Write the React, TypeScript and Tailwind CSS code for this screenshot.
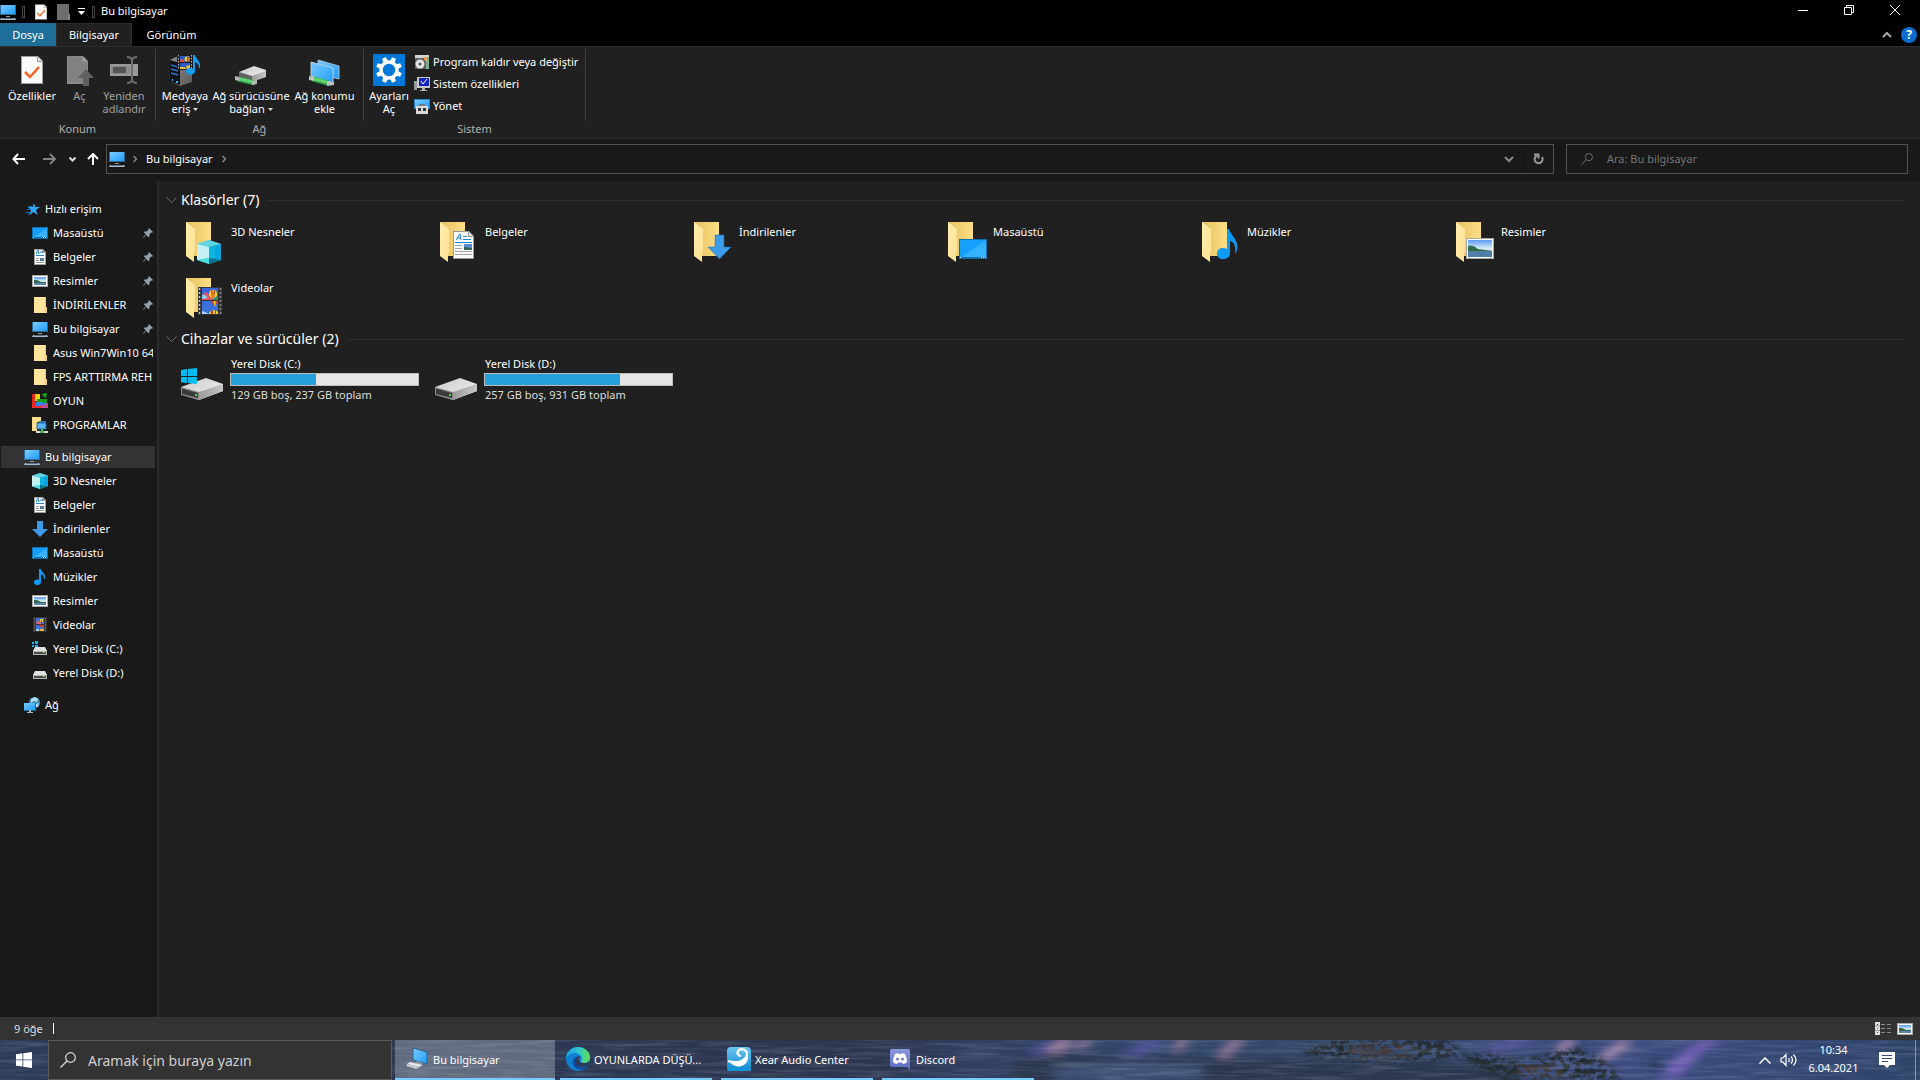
import type { ReactNode } from 'react'

interface IconProps {
  className?: string
}

interface NavItem {
  label: string
  icon: ReactNode
  pinned?: boolean
}

// Gradients shared by every icon on the page
function IconDefs() {
  return (
    <svg className="absolute w-0 h-0" aria-hidden="true">
      <defs>
        <linearGradient id="screen" x1="0" y1="0" x2="1" y2="1">
          <stop offset="0" stopColor="#7ccbff" />
          <stop offset="1" stopColor="#1f9dfb" />
        </linearGradient>
        <linearGradient id="desk" x1="0" y1="0" x2="1" y2="1">
          <stop offset="0" stopColor="#1a9fff" />
          <stop offset="0.5" stopColor="#12a0ff" />
          <stop offset="0.52" stopColor="#30b0ff" />
          <stop offset="1" stopColor="#3cb4ff" />
        </linearGradient>
        <linearGradient id="folderBack" x1="0" y1="0" x2="1" y2="0">
          <stop offset="0" stopColor="#e5c062" />
          <stop offset="1" stopColor="#fddf85" />
        </linearGradient>
        <linearGradient id="folderFront" x1="0" y1="0" x2="1" y2="1">
          <stop offset="0" stopColor="#ffecac" />
          <stop offset="1" stopColor="#ffe293" />
        </linearGradient>
        <linearGradient id="driveTop" x1="0" y1="0" x2="1" y2="1">
          <stop offset="0" stopColor="#c9cacc" />
          <stop offset="1" stopColor="#f2f3f5" />
        </linearGradient>
        <linearGradient id="driveSide" x1="0" y1="0" x2="1" y2="0">
          <stop offset="0" stopColor="#9b9b9b" />
          <stop offset="1" stopColor="#c6c6c6" />
        </linearGradient>
        <linearGradient id="sky" x1="0" y1="0" x2="0" y2="1">
          <stop offset="0" stopColor="#5b9cf5" />
          <stop offset="0.5" stopColor="#d8ecf8" />
          <stop offset="1" stopColor="#7ba4c8" />
        </linearGradient>
        <linearGradient id="server" x1="0" y1="0" x2="1" y2="1">
          <stop offset="0" stopColor="#8f8f8f" />
          <stop offset="1" stopColor="#5b5b5b" />
        </linearGradient>
        <linearGradient id="edgeTop" x1="0" y1="0" x2="1" y2="0">
          <stop offset="0" stopColor="#1aa0e0" />
          <stop offset="0.5" stopColor="#2fc4d4" />
          <stop offset="1" stopColor="#63e04c" />
        </linearGradient>
        <linearGradient id="xear" x1="0" y1="0" x2="0" y2="1">
          <stop offset="0" stopColor="#6cc8f0" />
          <stop offset="1" stopColor="#0d86d0" />
        </linearGradient>
        <linearGradient id="discord" x1="0" y1="0" x2="0" y2="1">
          <stop offset="0" stopColor="#8a9adf" />
          <stop offset="1" stopColor="#5a6bc0" />
        </linearGradient>
      </defs>
    </svg>
  )
}

function PcIcon() {
  return (
    <svg width="16" height="16" viewBox="0 0 16 16" className="shrink-0">
      <rect x="0" y="1" width="16" height="10" fill="#2b6a94" />
      <rect x="1" y="1" width="14" height="9" fill="url(#screen)" />
      <rect x="6" y="12" width="4" height="1" fill="#8e9aa3" />
      <path d="M1 14h14l1 2H0z" fill="#a9bccb" />
      <rect x="2" y="14" width="12" height="1" fill="#5d7486" />
    </svg>
  )
}

function DesktopIcon() {
  return (
    <svg width="16" height="16" viewBox="0 0 16 16" className="shrink-0">
      <rect x="0" y="2" width="16" height="12" fill="#1170b4" />
      <rect x="1" y="3" width="14" height="9" fill="url(#desk)" />
      <path d="M1 12h1v1H1zM11 12h1v1h-1zM13 12h1v1h-1z" fill="#fff" />
    </svg>
  )
}

function DocumentIcon() {
  return (
    <svg width="16" height="16" viewBox="0 0 16 16" className="shrink-0">
      <path d="M2 0h9l3 3v13H2z" fill="#a0a0a0" />
      <path d="M3 1h7v3h3v11H3z" fill="#fafafa" />
      <path d="M4 5l2-4 1 4M8 3h3" stroke="#1b84d6" fill="none" />
      <path d="M4 6h8v1H4z" fill="#1b84d6" />
      <path d="M4 9h3v1H4zM4 11h3v1H4zM4 13h8v1H4z" fill="#9a9a9a" />
      <rect x="8" y="9" width="4" height="3" fill="#4c7fa0" />
    </svg>
  )
}

function PictureIcon() {
  return (
    <svg width="16" height="16" viewBox="0 0 16 16" className="shrink-0">
      <rect x="0" y="2" width="16" height="12" fill="#a8a8a8" />
      <rect x="1" y="3" width="14" height="10" fill="#fff" />
      <rect x="2" y="4" width="12" height="8" fill="url(#sky)" />
      <path d="M2 7l3 0 4 2h5v1H2z" fill="#35664e" />
      <path d="M2 10h12v2H2z" fill="#5b86a8" />
    </svg>
  )
}

function FolderIcon() {
  return (
    <svg width="16" height="16" viewBox="0 0 16 16" className="shrink-0">
      <path d="M2 0h12v10h1v6H2z" fill="#e9c467" />
      <path d="M2 0h11v16H2z" fill="#ffe59b" />
      <path d="M13 10h2v6h-2z" fill="#f4d27a" />
    </svg>
  )
}

function ArrowDownIcon() {
  return (
    <svg width="16" height="16" viewBox="0 0 16 16" className="shrink-0">
      <path d="M5 0h6v8h5l-8 8-8-8h5z" fill="#3d9be9" />
    </svg>
  )
}

function MusicIcon() {
  return (
    <svg width="16" height="16" viewBox="0 0 16 16" className="shrink-0">
      <path d="M7 0h2c0 3 5 4 4 10h-1c0-3-1-4-3-5v8c0 4-7 4-7 0.500 0-3 3-3.500 5-2.500z" fill="#0c9bf5" />
    </svg>
  )
}

function CubeIcon({ className = 'w-4 h-4' }: IconProps) {
  return (
    <svg viewBox="0 0 24 24" className={`${className} shrink-0`}>
      <path d="M0 4l12-4 12 4v16l-12 4-12-4z" fill="#35c3d6" />
      <path d="M0 4l12-4 12 4-12 3z" fill="#5fd3e0" />
      <path d="M0 4l12 3v11L0 20z" fill="#c5f0f3" />
      <path d="M12 7l12-3v16l-12-2z" fill="#0aa5dd" />
      <path d="M12 7l6-1.500v13l-6-0.500z" fill="#0cb6dc" />
      <path d="M0 20l12-2v6z" fill="#4fdde0" />
      <path d="M12 18l12 2-12 4z" fill="#08718f" />
    </svg>
  )
}

function SmallFilmIcon() {
  return (
    <svg width="16" height="16" viewBox="0 0 16 16" className="shrink-0">
      <rect x="1" y="0" width="14" height="15" fill="#333" />
      <path d="M2.500 1v14M13.500 1v14" stroke="#777" strokeDasharray="1 1" />
      <rect x="4" y="1" width="8" height="6" fill="#3f6fd8" />
      <rect x="4" y="8" width="8" height="6" fill="#3f6fd8" />
      <path d="M4 5l3-1 2 2v1H4z" fill="#d66a7a" />
      <rect x="8" y="2" width="3" height="3" fill="#f0cd28" />
      <rect x="9" y="3" width="1" height="3" fill="#b8332a" />
      <rect x="8" y="8" width="3" height="2" fill="#d03a2a" />
      <path d="M4 12h3v2H4z" fill="#a9d6f5" />
      <rect x="8" y="12" width="4" height="2" fill="#e8b92c" />
    </svg>
  )
}

// Film strip of the "Videolar" tile: two balloon frames between the perforations
function FilmStrip() {
  return (
    <g>
      <rect x="20" y="13" width="24" height="28" fill="#333" />
      <path d="M21.500 14v27M42.500 14v27" stroke="#777" strokeWidth="2" strokeDasharray="2 2" />
      <path d="M21.500 14v27" stroke="#f0cc6c" strokeWidth="1" strokeDasharray="2 2" />
      <rect x="24" y="14" width="16" height="12" fill="#3a68dc" />
      <path d="M24 21l4-3 4 4 3 4H24z" fill="#e0556b" />
      <path d="M24 21l3 0 3 3-6 1z" fill="#8fd0f0" />
      <path d="M35 26l5-5v5z" fill="#2f9a4c" />
      <circle cx="35" cy="20" r="4" fill="#f5d322" />
      <path d="M33 16.500h4l-1 8h-2z" fill="#d02c28" />
      <path d="M34.500 16h1v9h-1z" fill="#f5d322" />
      <rect x="24" y="27" width="16" height="13" fill="#3a70da" />
      <path d="M33 27h7l-3 5h-1z" fill="#e03a28" />
      <path d="M35.500 27h2v5h-1z" fill="#f5d322" />
      <path d="M24 37l3 1 4 2H24z" fill="#a9d6f5" />
      <path d="M31 40a5 4 0 0 1 9-2v2z" fill="#f5d322" />
      <path d="M33 37h2v3h-2zM37 36h1v4h-1z" fill="#d02c28" />
    </g>
  )
}

function StarIcon() {
  return (
    <svg width="16" height="16" viewBox="0 0 16 16" className="shrink-0">
      <path d="M10 2l1.200 4H16l-4 3 1.500 5-4-3L5.500 14l1.500-5-3-3h4.500z" fill="#2fa8f5" />
      <path d="M4 5.500h4M3 8.500h4M2 11.500h4M4 13.500h2" stroke="#1272b8" />
    </svg>
  )
}

function GameIcon() {
  return (
    <svg width="16" height="16" viewBox="0 0 16 16" className="shrink-0">
      <path d="M0 1h4v14H0z" fill="#e8281e" />
      <path d="M3 1h5v7H3z" fill="#f6d800" />
      <path d="M5 6h10v4H5z" fill="#12a012" />
      <path d="M10 1l5-1-1 5-3-2z" fill="#0ea518" />
      <path d="M4 9h8v4H4z" fill="#2b86f0" />
      <path d="M8 10h8v5H8z" fill="#c4468c" />
      <path d="M5 10h8v2H5z" fill="#2b86f0" />
      <path d="M0 13h9v2H0z" fill="#f03030" />
    </svg>
  )
}

function ProgramsIcon() {
  return (
    <svg width="16" height="16" viewBox="0 0 16 16" className="shrink-0">
      <path d="M0 0h9v5H5v9H0z" fill="#ffe08a" />
      <path d="M7 4h7v6H7z" fill="#2a7fb6" />
      <path d="M5 6h9v6H5z" fill="#5bb8f2" stroke="#256d9c" />
      <rect x="9" y="12" width="2" height="2" fill="#4fc35f" />
      <path d="M4 14h12v2H4z" fill="#d9dedd" />
      <path d="M8 14h4v2H8z" fill="#45b854" />
    </svg>
  )
}

function SmallDriveIcon({ system }: { system?: boolean }) {
  return (
    <svg width="16" height="16" viewBox="0 0 16 16" className="shrink-0">
      <path d="M3 6h10l2 4H1z" fill="#e2e2e2" />
      <path d="M1 10h14v4H1z" fill="#b5b5b5" />
      <path d="M2 11h12v2H2z" fill="#4a4a4a" />
      <rect x="11" y="11" width="2" height="1" fill="#3fe04a" />
      {system && <path d="M0 0h6v6H0z" fill="#1a1a1a" />}
      {system && <path d="M0 1h2v2H0zM3 0h3v3H3zM0 4h2v2H0zM3 4h3v2H3z" fill="#10b0ee" />}
    </svg>
  )
}

function NetworkIcon() {
  return (
    <svg width="16" height="16" viewBox="0 0 16 16" className="shrink-0">
      <circle cx="10.500" cy="5.500" r="5.500" fill="#3f8db0" />
      <path d="M7 2l4-2 3 2-1 3-3-1-3 2zM12 7l3-1-1 4-2 0z" fill="#b5dcea" />
      <rect x="0" y="6" width="12" height="8" fill="#2b6a94" />
      <rect x="0" y="6" width="11" height="7" fill="url(#screen)" />
      <path d="M5 13h2v2H5zM3 15h6v1H3z" fill="#a9bccb" />
    </svg>
  )
}

function PinIcon() {
  return (
    <svg width="10" height="10" viewBox="0 0 10 10" className="shrink-0">
      <path d="M6 0l4 4-1 0.700-0.800-0.200L6.500 6.500 6.300 9 5.300 9 3.200 6.900 0.500 10 0 9.500 2.900 6.600 1 4.500 1.200 3.500 3.500 3.500 5.500 1.700 5.300 0.700z" fill="#93a1ab" />
    </svg>
  )
}

// 48px tile icons
function FolderTileIcon({ children }: { children: ReactNode }) {
  return (
    <svg width="48" height="48" viewBox="0 0 48 48" className="shrink-0">
      <path d="M8 4h25v34H8z" fill="url(#folderBack)" />
      <path d="M8 4l9 7v24l-1 0v9l-8-6z" fill="url(#folderFront)" />
      {children}
    </svg>
  )
}

function DriveTileIcon({ system }: { system?: boolean }) {
  return (
    <svg width="48" height="48" viewBox="0 0 48 48" className="shrink-0">
      <path d="M3 26l25-9 17 6v7l-24 9-18-6z" fill="url(#driveTop)" />
      <path d="M21 31l24-8v7l-24 9z" fill="url(#driveSide)" />
      <path d="M3 26l18 5v8L3 34z" fill="#8a8a8a" />
      <path d="M4 27.500l16 4.500v5L4 33z" fill="#3a3a3a" />
      <rect x="17" y="33" width="2" height="2" fill="#3fe04a" />
      {system && (
        <path d="M3 9l6-1v7H3zM10 8l9-1v8h-9zM3 16h6v6l-6-0.700zM10 16h9v7l-9-1z" fill="#00bcf2" />
      )}
    </svg>
  )
}

// Ribbon icons
function CheckDocIcon({ className }: IconProps) {
  return (
    <svg viewBox="0 0 22 28" className={className}>
      <path d="M0 0h17l5 5v23H0z" fill="#9d9d9d" />
      <path d="M1 1h15v5h5v21H1z" fill="#fafafa" />
      <path d="M17 1l4 4h-4z" fill="#e4e4e4" />
      <path d="M4 16l5 5 9-10" stroke="#f26522" strokeWidth="2.500" fill="none" />
    </svg>
  )
}

function OpenIcon() {
  return (
    <svg width="28" height="32" viewBox="0 0 28 32">
      <path d="M1 2h16l5 5v23H1z" fill="#8b8b8b" />
      <path d="M2 3h14v5h5v20H2z" fill="#828282" />
      <path d="M17 3l4 4h-4z" fill="#a5a5a5" />
      <path d="M20 15l8 9h-5v8h-6v-8h-5z" fill="#606060" />
    </svg>
  )
}

function RenameIcon() {
  return (
    <svg width="30" height="32" viewBox="0 0 30 32">
      <rect x="1" y="10" width="28" height="12" fill="#999" />
      <rect x="2" y="12" width="19" height="8" fill="#8b8b8b" />
      <rect x="4" y="13" width="13" height="6" fill="#555" />
      <path d="M18 3q5 0 5 4v18q0 4-5 4M28 3q-5 0-5 4M28 29q-5 0-5-4" stroke="#6b6b6b" strokeWidth="2" fill="none" />
    </svg>
  )
}

function MediaIcon() {
  return (
    <svg width="32" height="32" viewBox="0 0 32 32">
      <path d="M1 6l8-4 14 4v22l-12 4L1 27z" fill="url(#server)" />
      <path d="M1 6l10 3v22L1 27z" fill="#111" />
      <path d="M2 11l7 2M2 15l7 2M2 19l7 2" stroke="#2a73d4" strokeWidth="1.500" />
      <path d="M3 26h1M7 28h2" stroke="#37b6ff" strokeWidth="2" />
      <rect x="8" y="1" width="16" height="15" fill="#1c1c1c" />
      <path d="M9.500 1v15M22.500 1v15" stroke="#b8b8b8" strokeDasharray="1.500 1.500" />
      <path d="M11 2h10v6H11zM11 9h10v6H11z" fill="#2b58c8" />
      <path d="M11 6l3-1 2 3h-5z" fill="#e04f4f" />
      <circle cx="18" cy="5" r="2.500" fill="#f2cf25" />
      <path d="M18 3h1.500v5H18z" fill="#c52f25" />
      <path d="M11 13h4l3 2h-7zM17 12l4-1v4h-3z" fill="#e8c53a" />
      <path d="M24 1h2c1 4 6 6 5 13h-1c0-3-1-5-4-6v9c0 5-9 5-9 0.500 0-4 4-4 7-3z" fill="#159df0" />
    </svg>
  )
}

function NetDriveIcon() {
  return (
    <svg width="32" height="32" viewBox="0 0 32 32">
      <path d="M4 18l15-6 12 4v6l-15 6-12-3z" fill="url(#driveTop)" />
      <path d="M17 22l14-5v6l-14 5z" fill="url(#driveSide)" />
      <path d="M4 18l13 4v6L4 24z" fill="#626262" />
      <path d="M3 25l17 4" stroke="#2f9f45" strokeWidth="5" />
      <path d="M3 24.500l17 4" stroke="#5fd472" strokeWidth="3" />
      <path d="M0 22l4 1v4l-4-1zM17 27l5-1v4l-5 1z" fill="#b8b8b8" />
    </svg>
  )
}

function NetLocationIcon() {
  return (
    <svg width="32" height="32" viewBox="0 0 32 32">
      <path d="M9 6l21 6v13l-21-5z" fill="url(#screen)" stroke="#9dbccd" />
      <path d="M2 8l22 6v15L2 22z" fill="url(#screen)" stroke="#b9cdd8" />
      <path d="M4 25l15 4" stroke="#2f9f45" strokeWidth="5" />
      <path d="M4 24.500l15 4" stroke="#5fd472" strokeWidth="3" />
      <path d="M0 22l5 1v4l-5-1zM18 27l7 1v3l-7 1z" fill="#c2c2c2" />
    </svg>
  )
}

function SettingsIcon() {
  const teeth = [0, 45, 90, 135, 180, 225, 270, 315]
  return (
    <svg width="32" height="32" viewBox="0 0 32 32">
      <rect width="32" height="32" fill="#0078d7" />
      <circle cx="16" cy="16" r="8" fill="none" stroke="#fff" strokeWidth="3.500" />
      {teeth.map(angle => (
        <path key={angle} d="M14 3h4l0.500 4h-5z" fill="#fff" transform={`rotate(${angle + 22.5} 16 16)`} />
      ))}
    </svg>
  )
}

function UninstallIcon() {
  return (
    <svg width="16" height="16" viewBox="0 0 16 16" className="shrink-0">
      <path d="M1 1h14v3H1z" fill="#d5d5d5" />
      <path d="M1 4h11v11H1z" fill="#5f5f5f" />
      <path d="M12 3h3v12h-3z" fill="#7fae8e" />
      <path d="M9 3h4v4h-2z" fill="#e8a058" />
      <circle cx="6" cy="10" r="4.500" fill="#e3e3e3" />
      <circle cx="6" cy="10" r="1.500" fill="#555" />
    </svg>
  )
}

function SystemIcon() {
  return (
    <svg width="16" height="16" viewBox="0 0 16 16" className="shrink-0">
      <path d="M0 5h3v9H0z" fill="#9a9a9a" />
      <rect x="0" y="6" width="2" height="1" fill="#52e052" />
      <rect x="3" y="1" width="13" height="11" fill="#c8c8c8" />
      <rect x="5" y="2" width="10" height="8" fill="#1223c0" />
      <path d="M7 5l2 3 4-5" stroke="#fff" fill="none" />
      <path d="M8 12h3v2H8zM6 14h7v1H6z" fill="#b0b0b0" />
    </svg>
  )
}

function ManageIcon() {
  return (
    <svg width="16" height="16" viewBox="0 0 16 16" className="shrink-0">
      <rect x="0" y="1" width="16" height="10" fill="#2f86c6" />
      <rect x="1" y="2" width="14" height="8" fill="url(#screen)" />
      <path d="M5 6h6v2H5z" fill="#777" />
      <path d="M2 8h12v8H2z" fill="#d9d9d9" />
      <path d="M4 10h3v3H4zM9 10h3v3H9z" fill="#333" />
    </svg>
  )
}

function Caret() {
  return (
    <svg width="5" height="3" viewBox="0 0 5 3" className="inline-block ml-[3px] mb-[2px] align-middle">
      <path d="M0 0h5L2.500 3z" fill="#ddd" />
    </svg>
  )
}

function SearchIcon({ className }: IconProps) {
  return (
    <svg viewBox="0 0 16 16" className={className} fill="none" stroke="currentColor" strokeWidth="1.200">
      <circle cx="10.500" cy="5.500" r="4.800" />
      <path d="M7 9L0.500 15.500" />
    </svg>
  )
}

function WindowsLogo() {
  return (
    <svg width="16" height="16" viewBox="0 0 16 16">
      <path d="M0 2.200l6.500-0.900v6.200H0zM7.300 1.200L16 0v7.500H7.300zM0 8.300h6.500v6.300L0 13.700zM7.300 8.300H16V16l-8.700-1.200z" fill="#fff" />
    </svg>
  )
}

function TaskPcIcon() {
  return (
    <svg width="24" height="24" viewBox="0 0 24 24" className="shrink-0">
      <path d="M8 1l14 4v12L8 13z" fill="url(#screen)" stroke="#29658c" />
      <path d="M12 14l6 2-3 2-5-2z" fill="#8b949b" />
      <path d="M5 15l13 3-4 2-12-3z" fill="#e4e8ea" />
      <path d="M2 17l13 3-4 2-10-3z" fill="#c3c9cd" />
    </svg>
  )
}

function EdgeIcon() {
  return (
    <svg width="24" height="24" viewBox="0 0 24 24" className="shrink-0">
      <circle cx="12" cy="12" r="12" fill="#1180d4" />
      <path d="M0 12C0 5 5 0 12 0c7 0 12 5 12 10 0 4-3 6-6 6-3 0-4-1-3-2 3-4-2-8-6-8-5 0-8 3-9 6z" fill="url(#edgeTop)" />
      <path d="M24 14c-3 3-11 3-11-2 0-1 1-2 1-3-4 0-6 4-5 8 1 3 5 5 9 4 2 0 4-2 4-2z" fill="#2d3c58" />
      <path d="M8 11c-3 5 0 12 7 12 3 0 5-1 7-4-5 2-13 1-13-5 0-2 1-4 3-5-2 0-3 1-4 2z" fill="#0c4f9e" />
    </svg>
  )
}

function XearIcon() {
  return (
    <svg width="24" height="24" viewBox="0 0 24 24" className="shrink-0">
      <rect width="24" height="24" rx="4" fill="url(#xear)" />
      <path d="M1 14c9 3 19 0 19-7 0-4-5-6-8-4-3 3-1 6 2 6" fill="none" stroke="#fff" strokeWidth="2.200" />
      <path d="M1 13c8 4 16 1 19-6 5 10-10 19-19 6z" fill="#fff" />
      <rect y="21" width="24" height="3" rx="1.500" fill="#1593d8" />
    </svg>
  )
}

function DiscordIcon() {
  return (
    <svg width="24" height="24" viewBox="0 0 24 24" className="shrink-0">
      <path d="M4 2h16q2 0 2 2v19l-3-3H4q-2 0-2-2V4q0-2 2-2z" fill="url(#discord)" />
      <path d="M7 7l3-1 0.500 1h3L14 6l3 1q2 4 2 8-2 2-4 2l-1-1.500h-4L9 17q-2 0-4-2 0-4 2-8z" fill="#fff" />
      <circle cx="9.500" cy="12" r="1.500" fill="#6b7bcb" />
      <circle cx="14.500" cy="12" r="1.500" fill="#6b7bcb" />
    </svg>
  )
}

// Strip of the night landscape showing through the taskbar
function Wallpaper() {
  return (
    <svg className="absolute inset-0 w-full h-full" viewBox="0 0 1920 40" preserveAspectRatio="none" aria-hidden="true">
      <defs>
        <linearGradient id="night" x1="0" y1="0" x2="1" y2="0">
          <stop offset="0" stopColor="#2d3b57" />
          <stop offset="0.45" stopColor="#2c3650" />
          <stop offset="0.55" stopColor="#33456b" />
          <stop offset="0.7" stopColor="#334a6c" />
          <stop offset="0.85" stopColor="#3c4c80" />
          <stop offset="1" stopColor="#2d4468" />
        </linearGradient>
        <filter id="soft" x="-20%" y="-50%" width="140%" height="200%">
          <feGaussianBlur stdDeviation="4" />
        </filter>
        <filter id="leaves" x="-10%" y="-20%" width="120%" height="140%">
          <feGaussianBlur in="SourceGraphic" stdDeviation="3" result="mass" />
          <feTurbulence type="fractalNoise" baseFrequency="0.16 0.2" numOctaves="3" seed="7" />
          <feColorMatrix values="0 0 0 0 0  0 0 0 0 0  0 0 0 0 0  6 0 0 0 -2.400" result="holes" />
          <feComposite in="mass" in2="holes" operator="in" />
        </filter>
        <filter id="grain" x="0" y="0" width="100%" height="100%">
          <feTurbulence type="fractalNoise" baseFrequency="0.02 0.3" numOctaves="3" seed="3" />
          <feColorMatrix values="0 0 0 0 0.550  0 0 0 0 0.600  0 0 0 0 0.750  1.200 0 0 0 -0.500" />
        </filter>
      </defs>
      <rect width="1920" height="40" fill="url(#night)" />
      <g filter="url(#soft)">
        <path d="M1020 14l200 4 300 6v22h-520z" fill="#2a384f" />
        <path d="M1050 30q80-14 160 0l-20 10h-130z" fill="#40547a" />
        <path d="M1025 14l30-14h20l-35 14zM1120 14l30-14h20l-30 14z" fill="#5a5aa8" />
        <path d="M1480 12l40-14h20l-45 14zM1660 38q20-34 50-40h20q-30 10-50 40z" fill="#6a5cb0" />
        <path d="M1596 18l24-16h16l-30 18zM1552 12l14-12h14l-16 12z" fill="#b890b0" />
        <path d="M1042 12l20-14h18l-20 14zM1072 8l12-9h12l-14 9zM1170 10l10-10h12l-12 10zM1216 16l16-16h16l-22 16z" fill="#a07a98" />
      </g>
      <g filter="url(#leaves)">
        <path d="M1298 12l30-12h120l14 12-20 8-60 2-60-4z" fill="#23272c" />
        <path d="M1452 16l36-2 30 6 40-8 20-4 24 12 24 20h-120z" fill="#23292d" />
        <path d="M1350 6h60v10h-60zM1520 26h40v10h-40z" fill="#4a4140" />
      </g>
      <g filter="url(#soft)" opacity="0.6">
        <path d="M1644 22l18-4-4 12z" fill="#1f2733" />
      </g>
      <rect width="1920" height="40" filter="url(#grain)" opacity="0.35" />
    </svg>
  )
}

const quickAccess: NavItem[] = [
  { label: 'Masaüstü', icon: <DesktopIcon />, pinned: true },
  { label: 'Belgeler', icon: <DocumentIcon />, pinned: true },
  { label: 'Resimler', icon: <PictureIcon />, pinned: true },
  { label: 'İNDİRİLENLER', icon: <FolderIcon />, pinned: true },
  { label: 'Bu bilgisayar', icon: <PcIcon />, pinned: true },
  { label: 'Asus Win7Win10 64', icon: <FolderIcon /> },
  { label: 'FPS ARTTIRMA REH', icon: <FolderIcon /> },
  { label: 'OYUN', icon: <GameIcon /> },
  { label: 'PROGRAMLAR', icon: <ProgramsIcon /> }
]

const thisPc: NavItem[] = [
  { label: '3D Nesneler', icon: <CubeIcon /> },
  { label: 'Belgeler', icon: <DocumentIcon /> },
  { label: 'İndirilenler', icon: <ArrowDownIcon /> },
  { label: 'Masaüstü', icon: <DesktopIcon /> },
  { label: 'Müzikler', icon: <MusicIcon /> },
  { label: 'Resimler', icon: <PictureIcon /> },
  { label: 'Videolar', icon: <SmallFilmIcon /> },
  { label: 'Yerel Disk (C:)', icon: <SmallDriveIcon system /> },
  { label: 'Yerel Disk (D:)', icon: <SmallDriveIcon /> }
]

const folders: NavItem[] = [
  {
    label: '3D Nesneler',
    icon: <svg x="19" y="22" width="24" height="24" viewBox="0 0 24 24"><CubeIcon className="w-6 h-6" /></svg>
  },
  {
    label: 'Belgeler',
    icon: (
      <g>
        <path d="M21 13h16l5 5v23H21z" fill="#9a9a9a" />
        <path d="M22 14h14v5h5v21H22z" fill="#fafafa" />
        <path d="M37 14l4 4h-4z" fill="#ddd" />
        <path d="M24 22l4-6 1 6M25 20h4" stroke="#1b84d6" fill="none" />
        <path d="M31 18h4v1h-4zM31 21h8v1h-8zM23 24h17v1H23z" fill="#1b84d6" />
        <path d="M23 27h7v1h-7zM23 30h7v1h-7zM23 33h17v1H23zM23 36h17v1H23z" fill="#a3a3a3" />
        <rect x="32" y="26" width="8" height="6" fill="#5b8bd0" />
        <path d="M32 29l8 1v2h-8z" fill="#2f6658" />
      </g>
    )
  },
  {
    label: 'İndirilenler',
    icon: <path d="M29 17h9v12h7L33.500 41 22 29h7z" fill="#3d9be9" stroke="#1f6cb0" strokeWidth="0.500" />
  },
  {
    label: 'Masaüstü',
    icon: (
      <g>
        <rect x="19" y="26" width="28" height="15" fill="#1170b4" />
        <rect x="19" y="21" width="28" height="20" fill="#1170b4" />
        <rect x="20" y="22" width="26" height="17" fill="url(#desk)" />
        <path d="M20 39h1v1h-1zM41 39h1v1h-1zM43 39h1v1h-1zM45 39h1v1h-1z" fill="#fff" />
      </g>
    )
  },
  {
    label: 'Müzikler',
    icon: <path d="M33 11h2c1 6 10 10 8 21l-2 4c1-9-1-12-5-13v12c0 8-13 8-13 1 0-6 6-7 10-5z" fill="#0c9bf5" />
  },
  {
    label: 'Resimler',
    icon: (
      <g>
        <rect x="18" y="20" width="28" height="21" fill="#a8a8a8" />
        <rect x="19" y="21" width="26" height="19" fill="#fff" />
        <rect x="20" y="22" width="24" height="17" fill="url(#sky)" />
        <path d="M20 28q5-2 10 3l14 2H20z" fill="#2f6b46" />
        <path d="M20 33h24v6H20z" fill="#4f7ea6" />
      </g>
    )
  },
  { label: 'Videolar', icon: <FilmStrip /> }
]

const drives = [
  { label: 'Yerel Disk (C:)', info: '129 GB boş, 237 GB toplam', used: 45.5, system: true },
  { label: 'Yerel Disk (D:)', info: '257 GB boş, 931 GB toplam', used: 72, system: false }
]

const tasks = [
  { label: 'Bu bilgisayar', icon: <TaskPcIcon />, active: true },
  { label: 'OYUNLARDA DÜŞÜ...', icon: <EdgeIcon />, active: false },
  { label: 'Xear Audio Center', icon: <XearIcon />, active: false },
  { label: 'Discord', icon: <DiscordIcon />, active: false }
]

function TitleBar() {
  return (
    <header className="flex h-[23px] bg-black">
      <div className="flex items-center flex-1">
        <PcIcon />
        <span className="w-[3px] h-3 ml-[6px] border border-[#4a4a4a]" />
        <button aria-label="Özellikler" className="ml-[10px]"><CheckDocIcon className="w-3 h-4" /></button>
        <button aria-label="Yeni klasör" className="ml-[10px]">
          <svg width="13" height="16" viewBox="0 0 13 16"><path d="M0 0h12v10h1v6H0z" fill="#6e6e6e" /><path d="M11 10h2v6h-2z" fill="#858585" /></svg>
        </button>
        <button aria-label="Hızlı erişim araç çubuğu" className="ml-2">
          <svg width="7" height="7" viewBox="0 0 7 7"><path d="M0 0h7v1H0zM0 3h7L3.500 7z" fill="#fff" /></svg>
        </button>
        <span className="w-[3px] h-3 ml-[7px] border border-[#4a4a4a]" />
        <h1 className="ml-[6px] pb-[2px]">Bu bilgisayar</h1>
      </div>
      <div className="flex pr-[2px] pb-[3px]">
        <button aria-label="Simge durumuna küçült" className="flex items-center justify-center w-[46px]">
          <svg width="10" height="10" viewBox="0 0 10 10"><path d="M0 5h10v1H0z" fill="#fff" /></svg>
        </button>
        <button aria-label="Önceki boyut" className="flex items-center justify-center w-[46px]">
          <svg width="10" height="10" viewBox="0 0 10 10" fill="none" stroke="#fff"><path d="M0.500 2.500h7v7h-7zM2.500 2.500v-2h7v7h-2" /></svg>
        </button>
        <button aria-label="Kapat" className="flex items-center justify-center w-[46px]">
          <svg width="10" height="10" viewBox="0 0 10 10" stroke="#fff"><path d="M0 0l10 10M10 0L0 10" /></svg>
        </button>
      </div>
    </header>
  )
}

function RibbonTabs() {
  return (
    <nav className="flex h-[23px] bg-black">
      <button className="w-14 bg-[#1d6f99]">Dosya</button>
      <button className="w-[76px] bg-[#202020] border border-b-0 border-[#2d2d2d]">Bilgisayar</button>
      <button className="w-[79px]">Görünüm</button>
      <div className="flex items-center gap-[9px] ml-auto pr-[3px]">
        <button aria-label="Şeridi simge durumuna küçült">
          <svg width="10" height="6" viewBox="0 0 10 6" fill="none" stroke="#aaa" strokeWidth="2"><path d="M1 5l4-4 4 4" /></svg>
        </button>
        <button aria-label="Yardım" className="w-4 h-4 rounded-full bg-[#0b6cce] text-xs leading-4 font-bold">?</button>
      </div>
    </nav>
  )
}

interface RibbonButtonProps {
  icon: ReactNode
  lines: ReactNode[]
  width: string
  disabled?: boolean
}

function RibbonButton({ icon, lines, width, disabled }: RibbonButtonProps) {
  return (
    <button disabled={disabled} className={`${width} flex flex-col items-center pt-[3px] ${disabled ? 'text-[#a0a0a0]' : ''}`}>
      <span className="flex items-center justify-center h-8 mb-[3px]">{icon}</span>
      {lines.map((line, i) => (
        <span key={i} className="leading-[13px] whitespace-nowrap">{line}</span>
      ))}
    </button>
  )
}

function RibbonGroup({ title, className, children }: { title: string; className: string; children: ReactNode }) {
  return (
    <section className="flex pt-[2px]">
      <div className={className}>
        <div className="flex items-start h-[71px] pt-[2px]">{children}</div>
        <h2 className="text-center leading-[18px] text-[#b0b0b0]">{title}</h2>
      </div>
      <span className="w-px h-[72px] bg-[#404040]" />
    </section>
  )
}

function Ribbon() {
  const systemActions = [
    { label: 'Program kaldır veya değiştir', icon: <UninstallIcon /> },
    { label: 'Sistem özellikleri', icon: <SystemIcon /> },
    { label: 'Yönet', icon: <ManageIcon /> }
  ]

  return (
    <div className="flex h-[93px] bg-[#202020] border-y border-[#2d2d2d]">
      <RibbonGroup title="Konum" className="w-[155px] px-1">
        <RibbonButton width="w-[56px]" icon={<CheckDocIcon className="w-[22px] h-7" />} lines={['Özellikler']} />
        <RibbonButton width="w-[39px]" icon={<OpenIcon />} lines={['Aç']} disabled />
        <RibbonButton width="w-[50px]" icon={<RenameIcon />} lines={['Yeniden', 'adlandır']} disabled />
      </RibbonGroup>
      <RibbonGroup title="Ağ" className="w-[207px] px-1">
        <RibbonButton width="w-[50px]" icon={<MediaIcon />} lines={['Medyaya', <>eriş<Caret /></>]} />
        <RibbonButton width="w-[82px]" icon={<NetDriveIcon />} lines={['Ağ sürücüsüne', <>bağlan<Caret /></>]} />
        <RibbonButton width="w-[65px]" icon={<NetLocationIcon />} lines={['Ağ konumu', 'ekle']} />
      </RibbonGroup>
      <RibbonGroup title="Sistem" className="w-[221px]">
        <RibbonButton width="w-[50px]" icon={<SettingsIcon />} lines={['Ayarları', 'Aç']} />
        <div>
          {systemActions.map(action => (
            <button key={action.label} className="flex items-center gap-[3px] h-[22px]">
              {action.icon}
              {action.label}
            </button>
          ))}
        </div>
      </RibbonGroup>
    </div>
  )
}

function Crumb() {
  return (
    <svg width="4" height="8" viewBox="0 0 4 8" fill="none" stroke="#8a8a8a" strokeWidth="1.500" className="shrink-0">
      <path d="M0.500 1l3 3-3 3" />
    </svg>
  )
}

function AddressBar() {
  return (
    <div className="flex items-center h-[42px] px-3 pb-[2px] bg-[#191919]">
      <button aria-label="Geri">
        <svg width="13" height="12" viewBox="0 0 13 12" fill="none" stroke="#fff" strokeWidth="2"><path d="M6 1L1.500 6 6 11M2 6h11" /></svg>
      </button>
      <button aria-label="İleri" className="ml-[18px]">
        <svg width="13" height="12" viewBox="0 0 13 12" fill="none" stroke="#858585" strokeWidth="1.800"><path d="M7 1l5 5-5 5M12 6H0" /></svg>
      </button>
      <button aria-label="Son konumlar" className="ml-[13px]">
        <svg width="7" height="5" viewBox="0 0 7 5" fill="none" stroke="#ddd" strokeWidth="2"><path d="M0.500 0.500l3 3 3-3" /></svg>
      </button>
      <button aria-label="Yukarı" className="ml-[11px]">
        <svg width="12" height="12" viewBox="0 0 12 12" fill="none" stroke="#fff" strokeWidth="2"><path d="M1 6l5-5 5 5M6 1v11" /></svg>
      </button>
      <div className="flex items-center flex-1 h-[30px] ml-[7px] pl-[2px] border border-[#535353]">
        <PcIcon />
        <span className="ml-2"><Crumb /></span>
        <a href="#this-pc" className="mx-[9px]">Bu bilgisayar</a>
        <Crumb />
        <button aria-label="Önceki konumlar" className="ml-auto mr-[9px]">
          <svg width="10" height="7" viewBox="0 0 10 7" fill="none" stroke="#8a8a8a" strokeWidth="2"><path d="M1 1l4 4 4-4" /></svg>
        </button>
        <button aria-label="Yenile" className="flex items-center justify-center w-[30px] h-full border-l border-[#141414]">
          <svg width="12" height="12" viewBox="0 0 12 12" fill="none" stroke="#9a9a9a" strokeWidth="2"><path d="M4 2.500a4 4 0 1 0 5 1.500M1 1.500h4.500v4" /></svg>
        </button>
      </div>
      <label className="flex items-center w-[342px] h-[30px] ml-3 pl-[14px] border border-[#535353] text-[#767676]">
        <SearchIcon className="w-3 h-3 mr-[14px]" />
        <input type="search" aria-label="Ara" placeholder="Ara: Bu bilgisayar" className="flex-1 outline-none placeholder:text-[#767676]" />
      </label>
    </div>
  )
}

function NavList({ items }: { items: NavItem[] }) {
  return (
    <ul>
      {items.map(item => (
        <li key={item.label}>
          <a href="#item" className="flex items-center h-6 pl-8 pr-1 gap-[5px]">
            {item.icon}
            <span className="flex-1 min-w-0 overflow-hidden whitespace-nowrap">{item.label}</span>
            {item.pinned && <PinIcon />}
          </a>
        </li>
      ))}
    </ul>
  )
}

function Sidebar() {
  return (
    <aside className="w-[159px] shrink-0 pt-4 bg-[#191919] border-r-2 border-[#2b2b2b]">
      <a href="#quick" className="flex items-center gap-[5px] h-6 pl-6"><StarIcon />Hızlı erişim</a>
      <NavList items={quickAccess} />
      <div className="h-6 mt-2 py-px">
        <a href="#this-pc" className="flex items-center gap-[5px] h-[22px] ml-px mr-[2px] pl-[23px] bg-[#333]"><PcIcon />Bu bilgisayar</a>
      </div>
      <NavList items={thisPc} />
      <a href="#network" className="flex items-center gap-[5px] h-6 mt-2 pl-6"><NetworkIcon />Ağ</a>
    </aside>
  )
}

function GroupHeader({ title }: { title: string }) {
  return (
    <h2 className="flex items-center h-[22px] pl-[7px] text-sm">
      <svg width="11" height="7" viewBox="0 0 11 7" fill="none" stroke="#6a6a6a" className="mr-1"><path d="M0.500 0.500l5 5 5-5" /></svg>
      {title}
      <span className="flex-1 h-px ml-2 mr-4 bg-[#2e2e2e]" />
    </h2>
  )
}

function Content() {
  return (
    <main className="flex-1 pt-2 bg-[#202020]">
      <GroupHeader title="Klasörler (7)" />
      <div className="grid grid-cols-[repeat(auto-fill,254px)] mt-[3px] pl-[19px] pr-[120px]">
        {folders.map(folder => (
          <button key={folder.label} className="flex h-14 pt-1 gap-[5px] text-left">
            <FolderTileIcon>{folder.icon}</FolderTileIcon>
            <span className="pt-[6px]">{folder.label}</span>
          </button>
        ))}
      </div>
      <div className="mt-[2px]">
        <GroupHeader title="Cihazlar ve sürücüler (2)" />
      </div>
      <div className="grid grid-cols-[repeat(auto-fill,254px)] mt-[3px] pl-[19px]">
        {drives.map(drive => (
          <button key={drive.label} className="flex h-14 gap-1 text-left">
            <span className="pt-2"><DriveTileIcon system={drive.system} /></span>
            <span className="pt-[3px]">
              <span className="block pl-px">{drive.label}</span>
              <span className="block w-[189px] h-[13px] my-px bg-[#e6e6e6] border border-[#bcbcbc]">
                <span className="block h-full bg-[#26a0da]" style={{ width: `${drive.used}%` }} />
              </span>
              <span className="block pl-px text-[#dedede]">{drive.info}</span>
            </span>
          </button>
        ))}
      </div>
    </main>
  )
}

function StatusBar() {
  return (
    <footer className="flex items-center h-[23px] pl-[14px] pr-[7px] bg-[#333] text-[#dedede]">
      <span>9 öğe</span>
      <span className="w-px h-[11px] ml-[10px] bg-white" />
      <button aria-label="Ayrıntılar" className="ml-auto">
        <svg width="16" height="14" viewBox="0 0 16 14">
          <path d="M0 0h5v13H0z" fill="#e0e0e0" />
          <path d="M2 2h1v1H2z" fill="#333" />
          <path d="M2 6h1v1H2z" fill="#3a7bc0" />
          <path d="M2 10h1v1H2z" fill="#c03a3a" />
          <path d="M0 4h5M0 8.500h5" stroke="#999" />
          <path d="M6 2h4v1H6zM12 2h4v1h-4zM6 6h4v1H6zM12 6h4v1h-4zM6 10h4v1H6zM12 10h4v1h-4z" fill="#8a8a8a" />
        </svg>
      </button>
      <button aria-label="Büyük simgeler" className="ml-[6px]"><PictureIcon /></button>
    </footer>
  )
}

function Taskbar() {
  return (
    <div className="relative h-10">
      <Wallpaper />
      <div className="relative flex h-full">
        <button aria-label="Başlat" className="flex items-center justify-center w-12"><WindowsLogo /></button>
        <label className="flex items-center w-[344px] mr-[3px] pl-[11px] bg-[#333] border border-[#5a5a5a] text-[#dcdcdc]">
          <SearchIcon className="w-4 h-4 mr-3" />
          <input type="search" aria-label="Görev çubuğunda ara" placeholder="Aramak için buraya yazın" className="flex-1 pt-[2px] outline-none text-sm placeholder:text-[#d0d0d0]" />
        </label>
        <div className="flex gap-px">
          {tasks.map(task => (
            <button key={task.label} className={`flex flex-col w-40 ${task.active ? 'bg-white/25' : 'px-1'}`}>
              <span className={`flex items-center gap-1 h-[38px] whitespace-nowrap ${task.active ? 'pl-[10px]' : 'pl-[6px]'}`}>
                {task.icon}
                <span className="pt-px">{task.label}</span>
              </span>
              <span className="w-full h-[2px] bg-[#76cdfb]" />
            </button>
          ))}
        </div>
        <div className="flex items-center ml-auto">
          <button aria-label="Gizli simgeleri göster">
            <svg width="12" height="7" viewBox="0 0 12 7" fill="none" stroke="#fff" strokeWidth="1.500"><path d="M0.500 6.500l5.500-5.500 5.500 5.500" /></svg>
          </button>
          <button aria-label="Ses" className="ml-[9px]">
            <svg width="18" height="14" viewBox="0 0 18 14" fill="none" stroke="#fff" strokeWidth="1.200">
              <path d="M1 5h2l3-3.500v11L3 9H1zM8.500 5q1.500 2 0 4M11 3.500q3 3.500 0 7M13.500 1.500q5 5.500 0 11" />
            </svg>
          </button>
          <button className="w-[71px] pb-[2px] leading-[18px] text-center">10:34<br />6.04.2021</button>
          <button aria-label="Bildirimler" className="ml-[10px] mr-[20px]">
            <svg width="16" height="16" viewBox="0 0 16 16">
              <path d="M0 0h16v13h-5l-3 3-3-3H0z" fill="#fff" />
              <path d="M3 3.500h10M3 6.500h10M3 9.500h6" stroke="#3b4a6b" />
            </svg>
          </button>
          <span className="w-[5px] h-10 border-l border-[#8a95ac]" />
        </div>
      </div>
    </div>
  )
}

export default function App() {
  return (
    <div className="flex flex-col min-h-screen bg-black text-white text-[11px] leading-4 font-['Noto_Sans','Open_Sans',sans-serif]">
      <IconDefs />
      <TitleBar />
      <RibbonTabs />
      <Ribbon />
      <AddressBar />
      <div className="flex flex-1">
        <Sidebar />
        <Content />
      </div>
      <StatusBar />
      <Taskbar />
    </div>
  )
}
